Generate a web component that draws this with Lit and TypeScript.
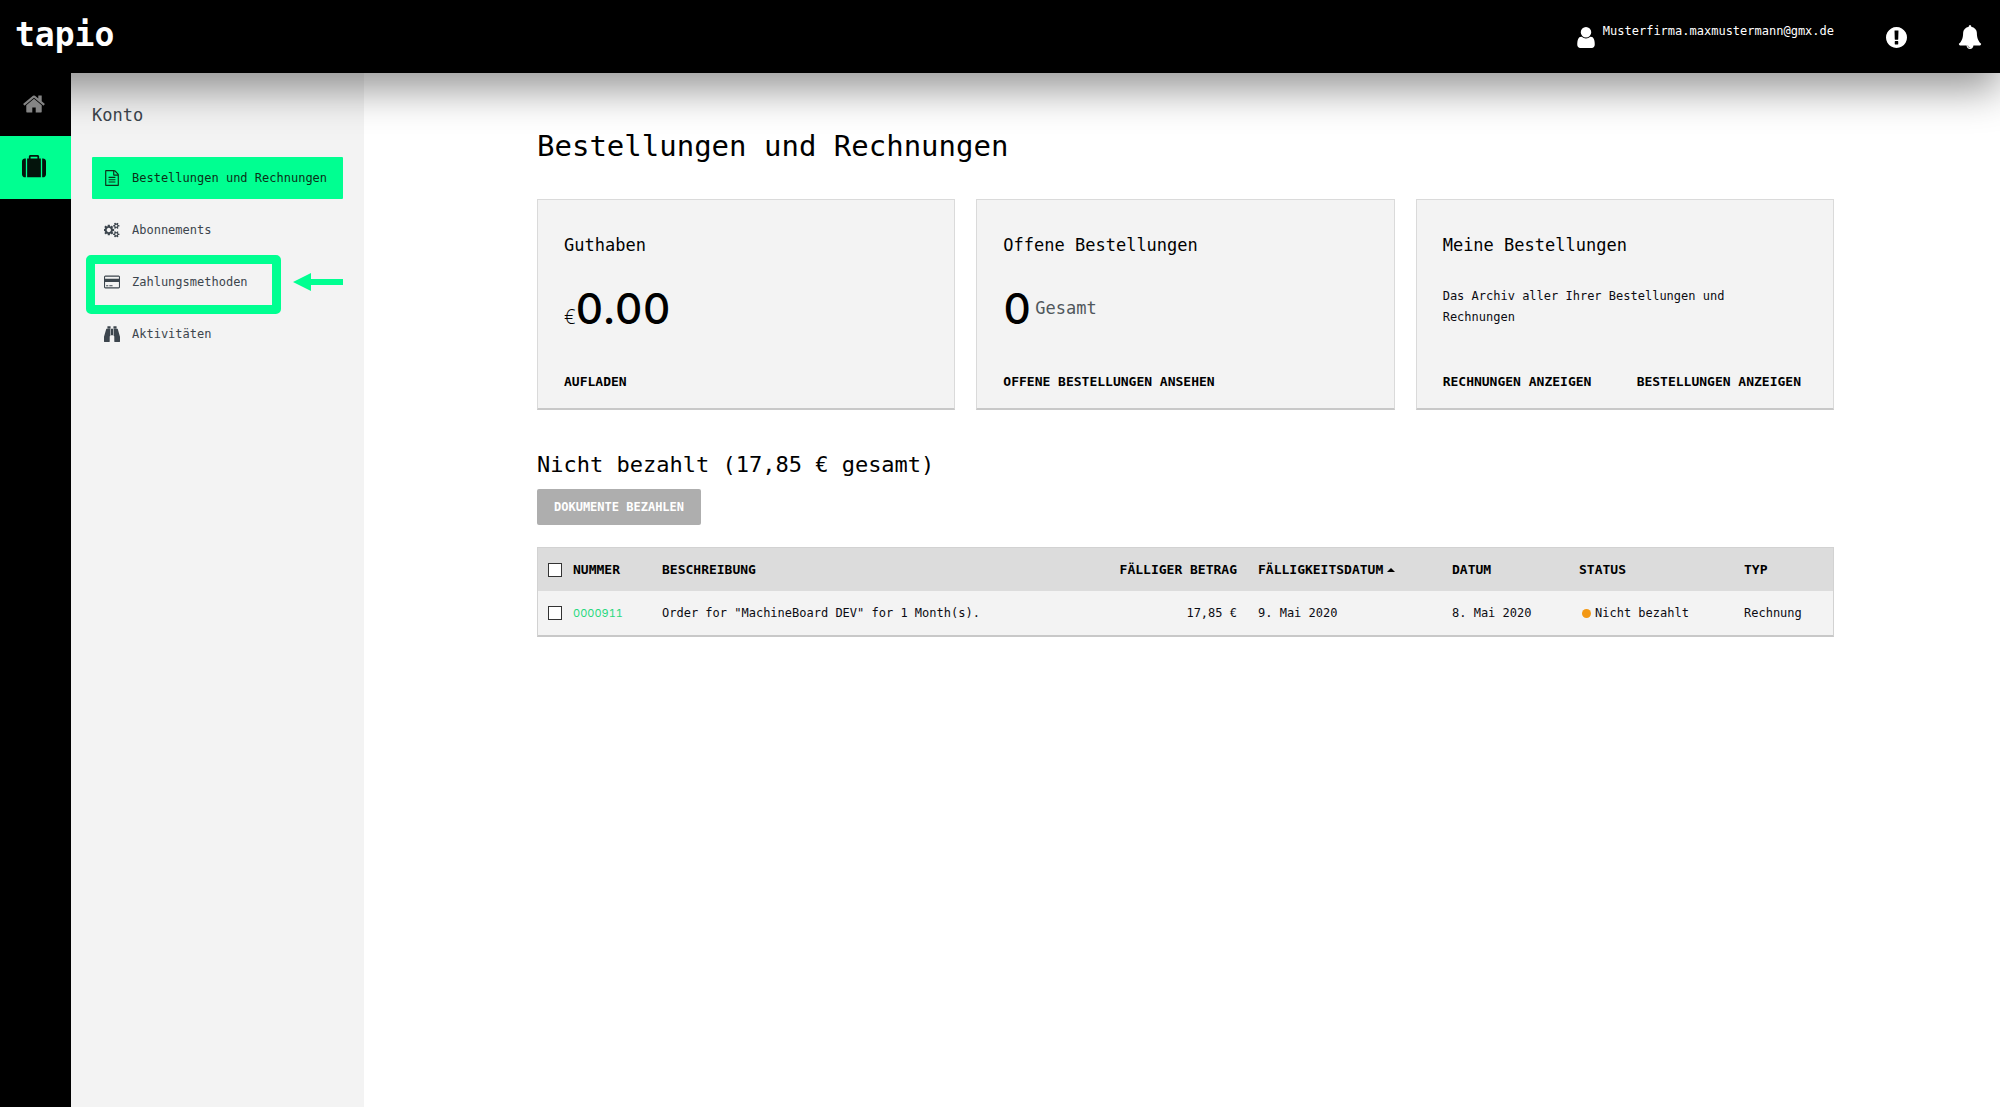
import { LitElement, html, css, svg } from "lit";
import { customElement } from "lit/decorators.js";
import { classMap } from "lit/directives/class-map.js";

const SMALL_COG =
  "v140q0 16-149 31-12 27-30 52 51 113 51 138 0 4-4 7-122 71-124 71-8 0-46-47t-52-68q-20 2-30 2t-30-2q-14 21-52 68t-46 47q-2 0-124-71-4-3-4-7 0-25 51-138-18-25-30-52-149-15-149-31v-140q0-16 149-31 13-29 30-52-51-113-51-138 0-4 4-7 4-2 35-20t59-34 30-16q8 0 46 46.500t52 67.500q20-2 30-2t30 2q51-71 92-112l6-2q4 0 124 70 4 3 4 7 0 25-51 138 17 23 30 52 149 15 149 31z";

const ICONS: Record<string, { box: string; d: string }> = {
  home: {
    box: "0 0 1792 1792",
    d: "M1472 992v480q0 26-19 45t-45 19h-384v-384h-256v384h-384q-26 0-45-19t-19-45v-480q0-1 .5-3t.5-3l575-474 575 474q1 2 1 6zm223-69l-62 74q-8 9-21 11h-3q-13 0-21-7l-692-577-692 577q-12 8-24 7-13-2-21-11l-62-74q-8-10-7-23.5t11-21.5l719-599q32-26 76-26t76 26l244 204v-195q0-14 9-23t23-9h192q14 0 23 9t9 23v408l219 182q10 8 11 21.500t-7 23.500z",
  },
  suitcase: {
    box: "0 0 1792 1792",
    d: "M640 256h512v-128h-512v128zm-352 0v1408h-64q-92 0-158-66t-66-158v-960q0-92 66-158t158-66h64zm1120 0v1408h-1024v-1408h128v-160q0-40 28-68t68-28h576q40 0 68 28t28 68v160h128zm384 224v960q0 92-66 158t-158 66h-64v-1408h64q92 0 158 66t66 158z",
  },
  file: {
    box: "0 0 1792 1792",
    d: "M1596 380q28 28 48 76t20 88v1152q0 40-28 68t-68 28h-1344q-40 0-68-28t-28-68v-1600q0-40 28-68t68-28h896q40 0 88 20t76 48zm-444-244v376h376q-10-29-22-41l-313-313q-12-12-41-22zm384 1528v-1024h-416q-40 0-68-28t-28-68v-416h-768v1536h1280zm-1024-864q0-14 9-23t23-9h704q14 0 23 9t9 23v64q0 14-9 23t-23 9h-704q-14 0-23-9t-9-23v-64zm736 224q14 0 23 9t9 23v64q0 14-9 23t-23 9h-704q-14 0-23-9t-9-23v-64q0-14 9-23t23-9h704zm0 256q14 0 23 9t9 23v64q0 14-9 23t-23 9h-704q-14 0-23-9t-9-23v-64q0-14 9-23t23-9h704z",
  },
  cogs: {
    box: "0 0 1920 1792",
    d:
      "M832 896q0-106-75-181t-181-75-181 75-75 181 75 181 181 75 181-75 75-181zm768 512q0-52-38-90t-90-38-90 38-38 90q0 53 37.500 90.500t90.500 37.500 90.500-37.500 37.500-90.500zm0-1024q0-52-38-90t-90-38-90 38-38 90q0 53 37.500 90.500t90.500 37.500 90.500-37.500 37.500-90.500zm-384 421v185q0 10-7 19.500t-16 10.500l-155 24q-11 35-32 76 34 48 90 115 7 11 7 20 0 12-7 19-23 30-82.500 89.500t-78.500 59.500q-11 0-21-7l-115-90q-37 19-77 31-11 108-23 155-7 24-30 24h-186q-11 0-20-7.500t-10-17.500l-23-153q-34-10-75-31l-118 89q-7 7-20 7-11 0-21-8-144-133-144-160 0-9 7-19 10-14 41-53t47-61q-23-44-35-82l-152-24q-10-1-17-9.500t-7-19.500v-185q0-10 7-19.500t16-10.500l155-24q11-35 32-76-34-48-90-115-7-11-7-20 0-12 7-20 22-30 82-89t79-59q11 0 21 7l115 90q34-18 77-32 11-108 23-154 7-24 30-24h186q11 0 20 7.500t10 17.500l23 153q34 10 75 31l118-89q8-7 20-7 11 0 21 8 144 133 144 160 0 8-7 19-12 16-42 54t-45 60q23 48 34 82l152 23q10 2 17 10.500t7 19.500z" +
      "M1856 1338" + SMALL_COG + "M1856 314" + SMALL_COG,
  },
  card: {
    box: "0 0 1920 1792",
    d: "M1760 128q66 0 113 47t47 113v1216q0 66-47 113t-113 47h-1600q-66 0-113-47t-47-113v-1216q0-66 47-113t113-47h1600zm-1600 128q-13 0-22.500 9.500t-9.500 22.500v224h1664v-224q0-13-9.500-22.500t-22.500-9.500h-1600zm1600 1280q13 0 22.500-9.500t9.500-22.500v-608h-1664v608q0 13 9.500 22.500t22.500 9.500h1600zm-1504-128v-128h256v128h-256zm384 0v-128h384v128h-384z",
  },
  binoculars: {
    box: "0 0 1792 1792",
    d: "M704 320v768q0 26-19 45t-45 19v576q0 26-19 45t-45 19h-512q-26 0-45-19t-19-45v-512l249-873q7-23 31-23h424zm320 0v704h-256v-704h256zm768 896v512q0 26-19 45t-45 19h-512q-26 0-45-19t-19-45v-576q-26 0-45-19t-19-45v-768h424q24 0 31 23zm-1056-1152v224h-352v-224q0-14 9-23t23-9h288q14 0 23 9t9 23zm672 0v224h-352v-224q0-14 9-23t23-9h288q14 0 23 9t9 23z",
  },
  user: {
    box: "256 128 1280 1536",
    d: "M1536 1399q0 109-62.500 187t-150.500 78h-854q-88 0-150.500-78t-62.500-187q0-85 8.500-160.500t31.500-152 58.500-131 94-89 134.500-34.500q131 128 313 128t313-128q76 0 134.500 34.500t94 89 58.500 131 31.500 152 8.500 160.500zm-256-887q0 159-112.500 271.500t-271.500 112.500-271.500-112.500-112.500-271.500 112.500-271.500 271.500-112.500 271.500 112.500 112.500 271.500z",
  },
  alert: {
    box: "128 128 1536 1536",
    d: "M896 128q209 0 385.500 103t279.500 279.500 103 385.500-103 385.500-279.500 279.500-385.500 103-385.500-103-279.500-279.500-103-385.500 103-385.500 279.500-279.500 385.500-103zm128 1247v-190q0-14-9-23.500t-22-9.500h-192q-13 0-23 10t-10 23v190q0 13 10 23t23 10h192q13 0 22-9.500t9-23.500zm-2-344l18-621q0-12-10-18-10-8-24-8h-220q-14 0-24 8-10 6-10 18l17 621q0 10 10 17.500t24 7.500h185q14 0 23.500-7.500t10.500-17.500z",
  },
  bell: {
    box: "0 0 1792 1792",
    d: "M912 1696q0-16-16-16-59 0-101.500-42.500t-42.500-101.500q0-16-16-16t-16 16q0 73 51.500 124.500t124.500 51.500q16 0 16-16zm816-288q0 52-38 90t-90 38h-448q0 106-75 181t-181 75-181-75-75-181h-448q-52 0-90-38t-38-90q50-42 91-88t85-119.500 74.500-158.500 50-206 19.500-260q0-152 117-282.500t307-158.500q-8-19-8-39 0-40 28-68t68-28 68 28 28 68q0 20-8 39 190 28 307 158.500t117 282.500q0 139 19.500 260t50 206 74.500 158.500 85 119.500 91 88z",
  },
};

const icon = (name: string, cls: string) => html`
  <svg class=${"icon " + cls} viewBox=${ICONS[name].box} aria-hidden="true">
    ${svg`<path d=${ICONS[name].d}></path>`}
  </svg>
`;

const NAV = [
  { label: "Bestellungen und Rechnungen", icon: "file", active: true, marked: false },
  { label: "Abonnements", icon: "cogs", active: false, marked: false },
  { label: "Zahlungsmethoden", icon: "card", active: false, marked: true },
  { label: "Aktivitäten", icon: "binoculars", active: false, marked: false },
];

const ORDERS = [
  {
    number: "0000911",
    text: 'Order for "MachineBoard DEV" for 1 Month(s).',
    amount: "17,85 €",
    due: "9. Mai 2020",
    date: "8. Mai 2020",
    status: "Nicht bezahlt",
    type: "Rechnung",
  },
];

@customElement("app-root")
export class AppRoot extends LitElement {
  static styles = css`
    :host {
      display: flex;
      flex-direction: column;
      min-height: 100vh;
      background: #fff;
      color: #0b0b12;
      font: 12px/20px "DejaVu Sans Mono", "Liberation Mono", monospace;
    }
    * { box-sizing: border-box; }
    a { color: inherit; text-decoration: none; }
    h1, h2, h3, p { margin: 0; font-weight: 400; }
    .icon { display: block; flex: none; fill: currentColor; }

    .topbar {
      position: relative;
      z-index: 1;
      display: flex;
      align-items: flex-start;
      justify-content: space-between;
      height: 73px;
      padding: 0 18px 0 15px;
      background: #000;
      color: #fff;
      box-shadow: 0 16px 40px rgba(0, 0, 0, 0.42);
    }
    .logo { padding-top: 15px; font-size: 33px; line-height: 40px; font-weight: 700; }
    .tools { display: flex; align-items: flex-start; padding-top: 21px; }
    .account { display: flex; gap: 8px; margin-right: 52px; }
    .tool {
      padding: 0;
      border: 0;
      background: none;
      color: inherit;
      margin-top: 4px;
    }
    .tool + .tool { margin-left: 51px; }
    .user { width: 18px; height: 21px; margin-top: 6px; }
    .alert { width: 21px; height: 21px; margin-top: 2px; }
    .bell { width: 24px; height: 24px; }

    .body { display: flex; flex: 1; }
    .rail { position: relative; z-index: 2; flex: none; width: 71px; background: #000; }
    .rail-link {
      display: flex;
      align-items: center;
      justify-content: center;
      height: 63px;
      padding: 0 4px 2px 0;
      color: #848484;
    }
    .rail-link.active { background: #00ff91; color: #04140c; }
    .rail-icon { width: 24px; height: 24px; }

    .side { flex: none; width: 293px; padding: 29px 21px 0; background: #f3f3f3; color: #3c454d; }
    .side-title { font-size: 17px; line-height: 26px; }
    .nav { display: flex; flex-direction: column; gap: 10px; margin-top: 29px; }
    .nav-item { position: relative; }
    .nav-link {
      display: flex;
      align-items: center;
      gap: 12px;
      height: 42px;
      padding-left: 12px;
      border-radius: 1px;
      white-space: nowrap;
    }
    .nav-link.active { background: #00ff91; color: #0c3018; }
    .nav-icon { width: 16px; height: 16px; }
    .marker {
      position: absolute;
      left: -6px;
      top: -6px;
      width: 195px;
      height: 59px;
      border: 9px solid #00ff91;
      border-radius: 5px;
      pointer-events: none;
    }
    .marker-arrow {
      position: absolute;
      left: 201px;
      top: 12px;
      width: 50px;
      height: 18px;
      fill: #00ff91;
    }

    .main { flex: 1; min-width: 0; padding: 53px 166px 0 173px; }
    .title { font-size: 29px; line-height: 40px; color: #000; }
    .cards { display: grid; grid-template-columns: repeat(3, 1fr); gap: 21px; margin-top: 33px; }
    .card {
      display: flex;
      flex-direction: column;
      min-height: 211px;
      padding: 32px 26px 16px;
      background: #f3f3f3;
      border: 1px solid #dadada;
      border-bottom: 2px solid #c8c8c8;
    }
    .card-title { font-size: 17px; line-height: 26px; color: #000; }
    .card-figure { display: flex; align-items: baseline; margin-top: 23px; line-height: 54px; color: #000; }
    .card-figure.count { align-items: center; }
    .figure {
      font-family: Inter, "Liberation Sans", sans-serif;
      font-size: 43px;
      font-weight: 500;
      font-feature-settings: "tnum";
    }
    .currency { font-family: "Open Sans", sans-serif; font-size: 20px; font-weight: 300; }
    .unit { margin-left: 4px; font-size: 17px; color: #50575c; }
    .card-text { margin-top: 28px; padding-right: 40px; line-height: 21px; }
    .card-actions { display: flex; justify-content: space-between; margin-top: auto; padding-right: 6px; }
    .action { font-size: 13px; font-weight: 700; white-space: nowrap; color: #000; }

    .section-title { margin-top: 40px; font-size: 22px; line-height: 30px; color: #000; }
    .pay {
      display: block;
      height: 36px;
      margin-top: 9px;
      padding: 0 17px;
      border: 0;
      border-radius: 2px;
      background: #aeaeae;
      color: #fff;
      font: 700 12px/20px "DejaVu Sans Mono", "Liberation Mono", monospace;
    }
    .orders {
      width: 100%;
      margin-top: 22px;
      table-layout: fixed;
      border-collapse: separate;
      border-spacing: 0;
      background: #f3f3f3;
      border: 1px solid #d2d2d2;
      border-bottom: 2px solid #c8c8c8;
    }
    .orders th, .orders td { padding: 0; text-align: left; white-space: nowrap; }
    .orders th { height: 43px; background: #dcdcdc; color: #000; font-size: 13px; font-weight: 700; }
    .orders td { height: 44px; }
    .orders .money { text-align: right; padding-right: 21px; }
    .c-check { width: 35px; }
    .c-number { width: 89px; }
    .c-money { width: 180px; }
    .c-due { width: 194px; }
    .c-date { width: 127px; }
    .c-status { width: 165px; }
    .c-type { width: 89px; }
    .check {
      appearance: none;
      display: block;
      width: 14px;
      height: 14px;
      margin: 0 0 0 10px;
      border: 1px solid #333;
      background: #fff;
    }
    .number { color: #2bd97f; font-family: Inter, sans-serif; font-size: 11px; font-feature-settings: "tnum"; }
    .sort { display: inline-block; width: 8px; height: 4px; margin-left: 4px; vertical-align: middle; fill: #000; }
    .status { display: flex; align-items: center; gap: 4px; padding-left: 3px; }
    .dot { width: 9px; height: 9px; border-radius: 50%; background: #f39814; }
  `;

  render() {
    return html`
      <header class="topbar">
        <a class="logo" href="#">tapio</a>
        <div class="tools">
          <a class="account" href="#">${icon("user", "user")}<span>Musterfirma.maxmustermann@gmx.de</span></a>
          <button class="tool" aria-label="Hinweise">${icon("alert", "alert")}</button>
          <button class="tool" aria-label="Benachrichtigungen">${icon("bell", "bell")}</button>
        </div>
      </header>
      <div class="body">
        <nav class="rail" aria-label="Bereiche">
          <a class="rail-link" href="#" aria-label="Start">${icon("home", "rail-icon")}</a>
          <a class="rail-link active" href="#" aria-label="Konto">${icon("suitcase", "rail-icon")}</a>
        </nav>
        <aside class="side">
          <h2 class="side-title">Konto</h2>
          <nav class="nav" aria-label="Konto">
            ${NAV.map(
              (item) => html`
                <div class="nav-item">
                  <a class=${classMap({ "nav-link": true, active: item.active })} href="#"
                    >${icon(item.icon, "nav-icon")}<span>${item.label}</span></a
                  >
                  ${item.marked
                    ? html`<div class="marker"></div>
                        <svg class="marker-arrow" viewBox="0 0 50 18" aria-hidden="true">
                          <path d="M0 9L18 0V6H50V12H18V18Z"></path>
                        </svg>`
                    : null}
                </div>
              `
            )}
          </nav>
        </aside>
        <main class="main">
          <h1 class="title">Bestellungen und Rechnungen</h1>
          <div class="cards">
            <section class="card">
              <h3 class="card-title">Guthaben</h3>
              <div class="card-figure"><span class="currency">€</span><span class="figure">0.00</span></div>
              <div class="card-actions"><a class="action" href="#">AUFLADEN</a></div>
            </section>
            <section class="card">
              <h3 class="card-title">Offene Bestellungen</h3>
              <div class="card-figure count"><span class="figure">0</span><span class="unit">Gesamt</span></div>
              <div class="card-actions"><a class="action" href="#">OFFENE BESTELLUNGEN ANSEHEN</a></div>
            </section>
            <section class="card">
              <h3 class="card-title">Meine Bestellungen</h3>
              <p class="card-text">Das Archiv aller Ihrer Bestellungen und Rechnungen</p>
              <div class="card-actions">
                <a class="action" href="#">RECHNUNGEN ANZEIGEN</a>
                <a class="action" href="#">BESTELLUNGEN ANZEIGEN</a>
              </div>
            </section>
          </div>
          <h2 class="section-title">Nicht bezahlt (17,85 € gesamt)</h2>
          <button class="pay" disabled>DOKUMENTE BEZAHLEN</button>
          <table class="orders">
            <thead>
              <tr>
                <th class="c-check"><input class="check" type="checkbox" aria-label="Alle auswählen" /></th>
                <th class="c-number">NUMMER</th>
                <th>BESCHREIBUNG</th>
                <th class="c-money money">FÄLLIGER BETRAG</th>
                <th class="c-due">FÄLLIGKEITSDATUM<svg class="sort" viewBox="0 0 8 4" aria-hidden="true"><path d="M0 4L4 0L8 4Z"></path></svg></th>
                <th class="c-date">DATUM</th>
                <th class="c-status">STATUS</th>
                <th class="c-type">TYP</th>
              </tr>
            </thead>
            <tbody>
              ${ORDERS.map(
                (o) => html`
                  <tr>
                    <td><input class="check" type="checkbox" aria-label=${o.number + " auswählen"} /></td>
                    <td><a class="number" href="#">${o.number}</a></td>
                    <td>${o.text}</td>
                    <td class="money">${o.amount}</td>
                    <td>${o.due}</td>
                    <td>${o.date}</td>
                    <td><span class="status"><span class="dot"></span>${o.status}</span></td>
                    <td>${o.type}</td>
                  </tr>
                `
              )}
            </tbody>
          </table>
        </main>
      </div>
    `;
  }
}
